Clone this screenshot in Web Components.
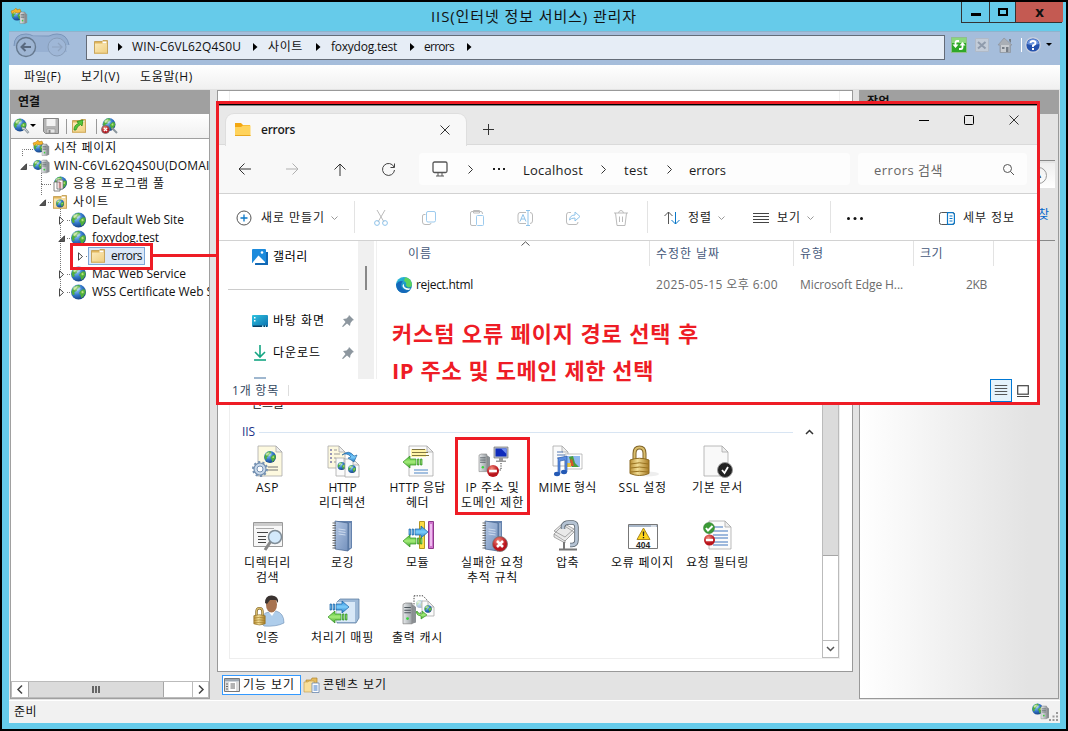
<!DOCTYPE html>
<html lang="ko">
<head>
<meta charset="utf-8">
<title>IIS(인터넷 정보 서비스) 관리자</title>
<style>
    body{
        margin: 0;
        width: 1068px;
        height: 731px;
        overflow: hidden;
        position: relative;
        font: 12px/16px "Open Sans", "Noto Sans CJK KR", sans-serif;
        color: #111;
    }
    /* annotations and the second window float over the manager */
    file-explorer{ position: absolute; left: 216px; top: 101px; }
    mark-box{ position: absolute; }
    .tree-mark{ left: 70px; top: 243px; width: 83px; height: 27px; }
    .link-mark{ left: 153px; top: 254px; width: 64px; height: 3px; border: 0; background: #ee1c25; }
    .item-mark{ left: 455px; top: 437px; width: 75px; height: 78px; }
</style>
</head>
<body>
<iis-manager></iis-manager>
<file-explorer></file-explorer>
<mark-box class="tree-mark"></mark-box>
<mark-box class="link-mark"></mark-box>
<mark-box class="item-mark"></mark-box>

<script>
const globe = (x, y, r) => `<g transform="translate(${x} ${y}) scale(${r / 8})">
    <circle r="8" fill="url(#gl)"/>
    <path fill="#4fae3c" d="M-6-4.500Q-3-8 1-7.500L2-5-1-3.500-2-1-4.500 0-4 2.500-6 3.500-7.500 0ZM2-1 4.500-3 7.300-2.500 7.500 1 5 5 3 6.500 2 3 .5 1Z"/>
    <path fill="#b8e07a" d="M-5-4.500-1-6.500-2-4-5-2ZM3-.5 5-1.500 5.500 1 3.500 1.500Z"/>
    <ellipse cx="-2" cy="-4" rx="4" ry="2.500" fill="#fff" opacity=".35"/></g>`
const page = (x, y, w, h, fill = '#fbfbfb') => `<path fill="${fill}" stroke="#aaa" stroke-width=".8" d="M${x} ${y}h${w - 6}l6 6v${h - 6}h${-w}z"/>
    <path fill="#eee" stroke="#aaa" stroke-width=".8" d="M${x + w - 6} ${y}v6h6z"/>`
const server = (x, y, s) => `<g transform="translate(${x} ${y}) scale(${s})">
    <path fill="#8b9094" d="M7 1 10 3V15L7 16Z"/><path fill="url(#steel)" stroke="#777" stroke-width=".5" d="M0 1 2 0H7V16H0Z"/>
    <path stroke="#4d565c" stroke-width=".8" d="M1 3.500H6M1 5.500H6M1 7.500H6"/><circle cx="3.500" cy="12" r="1.100" fill="#39d43c"/></g>`
const lock = (x, y, s) => `<g transform="translate(${x} ${y}) scale(${s})">
    <path fill="none" stroke="#80652a" stroke-width="4" d="M5 15V8Q5 2 10 2T15 8V15"/>
    <path fill="none" stroke="#d9bd6c" stroke-width="2" d="M5 15V8Q5 2 10 2T15 8V15"/>
    <path fill="url(#gold)" stroke="#8d6b22" d="M.5 14.500Q10 11 19.500 14.500V28Q10 32 .5 28Z"/>
    <path stroke="#9a7422" fill="none" d="M1 18.500Q10 16 19 18.500M1 22.500Q10 20.500 19 22.500M1 26.500Q10 25 19 26.500"/></g>`
const folder = `<path fill="#e0b55b" stroke="#c0994b" stroke-width=".8" d="M1.500 2.500H9L10 1.500H14.500V14.500H1.500Z"/>
    <path fill="#fff" d="M9.500 2.500H13.500V4.500H9.500Z"/><path fill="url(#fold)" d="M2 4.500H14V14H2Z"/><path fill="#e8c87f" d="M2 13H14V14.500H2Z"/>`
const arrowR = (x, y) => `<path fill="url(#blue)" stroke="#1b62a5" stroke-width=".7" d="M${x + 6} ${y + 3}h6v-3l7 6-7 6v-3h-6zM${x} ${y + 3}h1.500v6h-1.500zM${x + 3} ${y + 3}h1.500v6h-1.500z"/>`
const arrowL = (x, y) => `<path fill="url(#green)" stroke="#2f8f1f" stroke-width=".7" d="M${x + 13} ${y + 3}h-6v-3l-7 6 7 6v-3h6zM${x + 19} ${y + 3}h-1.500v6h1.500zM${x + 16} ${y + 3}h-1.500v6h1.500z"/>`
const book = `<path fill="#6583ae" d="M9 1 25 1V28L21 31 8 28Z"/><path fill="url(#bookg)" stroke="#46648f" stroke-width=".7" d="M8 1 21 3V31L8 29Z"/>
    <path fill="none" stroke="#dce6f5" stroke-width=".8" d="M11.500 9 18.500 10M11.500 11.500 18.500 12.500M11.500 14 18.500 15M23 3V28"/>
    <path stroke="#666" stroke-width="1" d="M5.500 3H9M5.500 5.500H9M5.500 8H9M5.500 10.500H9M5.500 13H9M5.500 15.500H9M5.500 18H9M5.500 20.500H9M5.500 23H9M5.500 25.500H9M5.500 28H9"/>`
const cross = (x, y, r) => `<circle cx="${x}" cy="${y}" r="${r}" fill="url(#red)" stroke="#777" stroke-width=".8"/>
    <path stroke="#fff" stroke-width="${r / 3}" d="M${x - r * .4} ${y - r * .4}l${r * .8} ${r * .8}m0 ${-r * .8}l${-r * .8} ${r * .8}"/>`
const noEntry = (x, y, r) => `<circle cx="${x}" cy="${y}" r="${r}" fill="url(#red)"/><path fill="#fff" d="M${x - r * .65} ${y - r * .22}h${r * 1.3}v${r * .44}h${-r * 1.3}z"/>`
const line = (d, c = '#333', w = 1) => `<path fill="none" stroke="${c}" stroke-width="${w}" d="${d}"/>`

const defs = `<defs>
    <radialGradient id="gl" cx=".35" cy=".3" r=".8"><stop offset="0" stop-color="#a5d8fa"/><stop offset=".5" stop-color="#3479cb"/><stop offset="1" stop-color="#0f3574"/></radialGradient>
    <linearGradient id="steel"><stop offset="0" stop-color="#e6e9eb"/><stop offset="1" stop-color="#9ba1a5"/></linearGradient>
    <linearGradient id="gold"><stop offset="0" stop-color="#b98f35"/><stop offset=".4" stop-color="#f2dd94"/><stop offset="1" stop-color="#a87b24"/></linearGradient>
    <linearGradient id="fold" x2="1" y2="1"><stop offset="0" stop-color="#fbe9b8"/><stop offset="1" stop-color="#f0cf80"/></linearGradient>
    <linearGradient id="blue" x2="0" y2="1"><stop offset="0" stop-color="#2b8edc"/><stop offset=".5" stop-color="#7ccdfb"/><stop offset="1" stop-color="#1f78c4"/></linearGradient>
    <linearGradient id="green" x2="0" y2="1"><stop offset="0" stop-color="#49b832"/><stop offset=".5" stop-color="#a5ec7a"/><stop offset="1" stop-color="#3aa327"/></linearGradient>
    <linearGradient id="bookg" x2="1" y2="1"><stop offset="0" stop-color="#b3c7e4"/><stop offset="1" stop-color="#7491bd"/></linearGradient>
    <radialGradient id="red" cx=".4" cy=".3"><stop offset="0" stop-color="#f28c7c"/><stop offset="1" stop-color="#b9141c"/></radialGradient>
    <linearGradient id="teal" x2="1" y2="1"><stop offset="0" stop-color="#2fc3e0"/><stop offset="1" stop-color="#0b6fae"/></linearGradient>
</defs>`

// [width, height, markup]
const icons = {
    server: [16, 16, globe(5, 7, 5) + server(8.500, 2, .8)],
    start: [16, 16, globe(6, 7, 5.500) + '<path fill="#f6b52a" stroke="#b57a12" stroke-width=".5" d="M0 3 3 2 5 0 6 2 9 1 10 4 7 5 3 4 1 6Z"/>' + server(9, 4, .72)],
    pool: [16, 16, globe(8.500, 7, 6.500) + '<path fill="#fff" stroke="#666" stroke-width=".8" d="M2 6H8V15H2ZM5 4H11V13H5Z"/>' + line('M6.500 7H9.500M6.500 9H9.500M6.500 11H9.500', '#c44', .8)],
    sites: [16, 16, folder + globe(8, 9.500, 4)],
    globe: [16, 16, globe(7.500, 8, 7.500)],
    folder: [16, 16, folder],
    connect: [17, 16, globe(7, 7, 6.500) + '<path fill="none" stroke="#8a959c" stroke-width="2.500" d="M9 10 12 11 15.500 15"/><path stroke="#d7dde0" d="M9 10 12 11 15 14.500" fill="none"/>'],
    disconnect: [17, 16, globe(8, 6.500, 6.500) + '<path fill="none" stroke="#8a959c" stroke-width="2" d="M11 10 16 15"/>' + cross(4.500, 11.500, 4)],
    save: [16, 16, '<path fill="#b4b4b4" stroke="#858585" d="M.5.500H15.500V15.500H2.500L.5 13.500Z"/><path fill="#f2f2f2" d="M3.500 1H12.500V8H3.500Z"/><path fill="#e5e5e5" stroke="#999" stroke-width=".7" d="M4 11H12V15H4Z"/><path fill="#888" d="M5.500 12H7.500V15H5.500Z"/>'],
    up: [16, 16, folder + '<path fill="#55c83c" stroke="#258b16" stroke-width=".8" d="M3 12Q3 7 7.500 5.500L6 3.500 12 2 11 8 9.500 6.500Q6 8 5 12Z"/>'],
    drop: [7, 4, '<path d="M0 0H6L3 3Z" fill="#000"/>'],
    crumb: [5, 8, '<path d="M0 0 4.500 4 0 8Z" fill="#000"/>'],
    refresh: [16, 16, '<path fill="#2fa828" stroke="#8fbf8c" d="M.5.500H15.500V15.500H.5Z"/><path fill="#8ad87c" d="M1 1H15V6H1Z"/><path fill="none" stroke="#fff" stroke-width="1.800" d="M8 4H6Q4.500 4 4.500 6V9M8 12H10Q11.500 12 11.500 10V7"/><path fill="#fff" d="M1.500 7.500H7.500L4.500 11ZM8.500 8.500H14.500L11.500 5Z"/>'],
    stop: [16, 16, '<path fill="#c3ccd8" stroke="#b0bac8" d="M1.500 1.500H14.500V14.500H1.500Z"/>' + line('M4 5 11.500 11.500M11.500 5 4 11.500', '#8f9bac', 2)],
    home: [17, 16, '<path fill="#a9aeb5" stroke="#8d949d" stroke-width=".7" d="M1 8 7 1 15 8H13.500V15.500H3V8Z"/><path fill="#c9cdd2" d="M4 8H12V15H4Z"/><path fill="#777e87" d="M9 10H11.500V15H9ZM5 10H7.500V12H5ZM12 2H14V6L12 4Z"/>'],
    help: [16, 16, '<circle cx="8" cy="8" r="7.300" fill="#2552ad" stroke="#c6cfdf" stroke-width="1.400"/><path fill="#6a93dd" d="M2 7Q3 2 8 2T14 7Q8 9 2 7Z"/><path fill="none" stroke="#fff" stroke-width="1.900" d="M5.500 6Q5.500 4 8 4T10.500 6Q10.500 7.500 8 8.500V10"/><path fill="#fff" d="M7 11H9V13H7Z"/>'],
    nav: [58, 28, `<path fill="#93aed0" stroke="#7a95ba" d="M1 14Q1 2 13 2Q17 2 20 4H36Q40 2 44 2Q54 2 56 13"/><path fill="#97b0d2" d="M3 14Q3 4 13 4L36 5Q44 3 50 7L54 20H6Z"/>
        <circle cx="13" cy="15" r="9.500" fill="#9eb5d3" stroke="#66798f" stroke-width="1.400"/>` + line('M18 15H9M12.500 11 8.500 15 12.500 19', '#59697f', 2) +
        '<circle cx="44" cy="15" r="9" fill="#9fb7d7" stroke="#879db9"/>' + line('M39 15H48M45 11 49 15 45 19', '#8fa4bf', 1.200)],
    treeOpen: [7, 7, '<path d="M6.500.800V6.500H.800Z" fill="#555" stroke="#222" stroke-width=".7"/>'],
    treeShut: [7, 9, '<path d="M1.500.800 5.500 4.500 1.500 8.200Z" fill="#fff" stroke="#333" stroke-width=".9"/>'],
    left: [6, 9, line('M5 .5 1 4.500 5 8.500', '#444', 1.500)],
    right: [6, 9, line('M1 .5 5 4.500 1 8.500', '#444', 1.500)],
    down: [9, 6, line('M1 1 4.500 4.500 8 1', '#555', 1.500)],
    upc: [9, 6, line('M1 5 4.500 1.500 8 5', '#333', 1.500)],
    feature: [16, 16, '<path fill="#fff" stroke="#777" d="M.5 1.500H15.500V14.500H.5Z"/><path fill="#9da7b1" d="M1 2H15V4.500H1Z"/><path fill="#ddd" d="M1 5H5V14H1ZM12 5H15V14H12Z"/>' + line('M2 7H4M2 9.500H4M2 12H4M6.500 7H11M6.500 9H11M6.500 11H11', '#666', 1)],
    content: [17, 16, '<path fill="#e6bb5c" stroke="#ad8430" stroke-width=".7" d="M3 3H8L9 1H14V12H3Z"/><path fill="#f8df9c" stroke="#bd9848" stroke-width=".6" d="M1 5H5L6 4H11V15H1Z"/><path fill="#fff" stroke="#6886af" stroke-width=".8" d="M9 6H16V15.500H9Z"/>' + line('M10.500 9H14.500M10.500 11H14.500M10.500 13H14.500', '#3976c8')],

    asp: [32, 32, page(6, 1, 24, 30, '#fdf9df') + globe(18, 12, 6) + line('M16 22H26M16 25H26', '#777', 1.200) +
        '<circle cx="8" cy="24" r="6" fill="#c9d9ea" stroke="#7591b2" stroke-width="1.200"/><circle cx="8" cy="24" r="7" fill="none" stroke="#7591b2" stroke-width="2" stroke-dasharray="2.200 2.200"/><circle cx="8" cy="24" r="3" fill="#fff" stroke="#7591b2"/>'],
    redirect: [32, 32, page(1, 1, 17, 22, '#fdf9df') + line('M7 5H10M7 9H13M7 13H9M7 17H9', '#999') + line('M3 5H5M3 9H5M3 13H5M3 17H5', '#77a', 1.500) +
        page(9, 13, 14, 18) + globe(14.500, 21, 4) + page(18, 14, 14, 18) + globe(25, 24, 4) + '<path fill="url(#blue)" stroke="#1c5d95" stroke-width=".6" d="M15 10Q22 4 27 11L30 10 27 17 21 13 24 12Q20 7 15 10Z"/>'],
    header: [32, 32, page(7, 1, 24, 30) + '<path fill="#fff4a8" d="M9 4H24V12H9Z"/>' + line('M10 4.500H23M10 7.500H26M10 10.500H27', '#807640', 1.200) + arrowL(1, 11) + line('M12 25H26M12 28H26', '#4d86c6', 1.200)],
    restrict: [32, 32, server(2, 9, 1.100) + '<path fill="#b8bfc6" stroke="#777" stroke-width=".7" d="M17 2H31V13H17Z"/><path fill="#102bbb" d="M18.500 3.500H29.500V11.500H18.500Z"/><path fill="#6e8bf0" d="M24 3.500H29.500V9Z"/><path fill="#999" d="M22 13H26V15.500H29V17H19V15.500H22Z"/><path fill="none" stroke="#333" stroke-dasharray="1.200 1.200" d="M24 18V25H20"/>' + noEntry(16, 26, 6)],
    mime: [32, 32, page(1, 1, 15, 20) + line('M5 7H11M5 10H13M5 13H13', '#557bb5') + '<path fill="#fff" stroke="#999" stroke-width=".6" d="M13 9H30V24H13Z"/><path fill="#8fb9ef" d="M15 11H28V22H15Z"/><path fill="#4a9e3c" d="M17 12 21 11 23 18 27 22H20Z"/><path fill="#d4552d" d="M18 15 20 14 22 21H19Z"/><path fill="#e8c53a" d="M15 18H19V22H15Z"/><path fill="#5a8be0" stroke="#2455a8" stroke-width=".6" d="M6 13 15 11V27H13V15L8 16V29H6Z"/><ellipse cx="5" cy="29" rx="3" ry="2.200" fill="#2459b5"/><ellipse cx="12" cy="27" rx="3" ry="2.200" fill="#2459b5"/>'],
    ssl: [32, 32, '<ellipse cx="20" cy="29" rx="12" ry="2.500" fill="#eee"/>' + lock(2.500, .5, 1)],
    doc: [32, 32, page(2, 1, 24, 30, '#f9f9f9') + '<circle cx="23" cy="25" r="7.500" fill="#222" stroke="#999"/><path fill="none" stroke="#fff" stroke-width="1.800" d="M20 25 22.500 28 26 22"/>'],
    browse: [32, 32, '<path fill="#f7f7f7" stroke="#999" d="M1.500 2.500H30.500V26.500H1.500Z"/><path fill="#ccc" d="M2 3H30V6H2Z"/>' + line('M4 8.500H22', '#aaa', 1) + line('M5 12.500H16M6 16.500H14M6 19.500H14M6 22.500H14', '#444') + line('M19 21 13 30', '#888', 3) + '<circle cx="23" cy="17" r="6.500" fill="#d3e9fb" stroke="#7f8c96" stroke-width="1.500"/>'],
    log: [32, 32, book],
    modules: [32, 32, '<path fill="#fbdc45" stroke="#b59721" d="M17.500 1.500H22.500V28.500H17.500Z"/><path fill="#fff29c" d="M19 8H21V24H19Z"/><path fill="#cf73cc" stroke="#8e3a8c" d="M26.500 1.500H31.500V28.500H26.500Z"/><path fill="#eebcf0" d="M28 4H30V26H28Z"/>' + arrowR(7, 6) + arrowL(1, 15)],
    failed: [32, 32, book + cross(23, 24, 7.500)],
    compress: [32, 32, '<path fill="#e9e9e9" stroke="#888" stroke-width=".7" d="M2 14 11 5 22 12 13 21ZM2 11 11 3 22 9 13 17ZM2 14V17L13 23V20"/>' + line('M11 9V6Q12 2.500 17 2.500H21Q24.500 3 24.500 7V20Q24.500 25 20 25H18', '#59646e', 4.500) + line('M11 9V6Q12 2.500 17 2.500H21Q24.500 3 24.500 7V20Q24.500 25 20 25H18', '#b5c3d3', 2.800) + line('M12 22V29M7 29.500H25', '#777', 2)],
    error: [32, 32, '<path fill="#fff" stroke="#777" d="M1.500 4.500H30.500V28.500H1.500Z"/><path fill="#a8b7c9" d="M2 5H30V7H2Z"/>' + line('M24 6H29', '#fff', 1) + '<path fill="#ffd51d" stroke="#a9861d" d="M16.500 8 23 19.500H10Z"/><path fill="#222" d="M15.700 11.500H17.300L17 16H16ZM15.800 17H17.200V18.200H15.800Z"/><text x="9" y="27.500" font-family="Liberation Sans" font-weight="bold" font-size="8.500" fill="#222">404</text>'],
    filter: [32, 32, page(7, 1, 22, 28) + line('M11 7H21M11 11H26M11 15H26M11 18H26M11 22H26M11 25H26', '#4176bd', 1.200) + '<circle cx="7" cy="8" r="5.500" fill="#3b9b36" stroke="#2c742a" stroke-width=".5"/>' + line('M4 8 6 10.500 10.500 6', '#fff', 2) + noEntry(7.500, 20, 5.500)],
    auth: [32, 32, '<path fill="#aecdeb" stroke="#6f8fb3" stroke-width=".6" d="M9 28Q9 18 17 17L20 19 24 16Q32 18 32 28Q24 32 12 31Z"/><path fill="#fff" d="M16 16 20 21 24 15Z"/><ellipse cx="19.500" cy="9.500" rx="5.500" ry="8" fill="#a77350"/><path fill="#3a3330" d="M13 8Q13 0 20 .5T26 8L24 5H18L15 9Z"/>' + lock(1.500, 12, .6)],
    handler: [32, 32, '<path fill="#9db9d7" stroke="#53779b" stroke-width=".7" d="M10 7 13 4H32V23L29 28H10Z"/><path fill="#d8e8f7" d="M10 7H28V27H10Z"/>' + arrowR(3, 6) + arrowL(1, 16)],
    cache: [32, 32, '<path fill="#fff" stroke="#444" stroke-dasharray="1.300 1.300" d="M12 .8H21L25 5V18H12Z"/><g opacity=".35">' + globe(18, 9, 4) + '</g>' + page(20, 6, 12, 15) + globe(26, 14, 3.700) + server(1, 8, 1.300) + '<path fill="url(#green)" stroke="#2f8f1f" stroke-width=".6" d="M15 16Q17 20 20 19V16L25 20 19 24V21Q15 21 14 17Z"/>'],
    tray: [17, 17, globe(5.500, 6, 5.500) + server(9, 3, .8)],

    tabFolder: [17, 15, '<path fill="#f3a712" d="M1 1H7L9 3H16V14H1Z"/><path fill="#ffd35c" d="M1 5H7L9 3.500H16.500V14H1Z"/><path fill="#e9a820" d="M1 13H16.500V14H1Z"/>'],
    x: [10, 10, line('M.5.500 9.500 9.500M9.500.500.5 9.500')],
    plus: [11, 11, line('M5.500 0V11M0 5.500H11')],
    min: [10, 10, line('M0 5.500H10', '#000')],
    max: [10, 10, '<rect x=".5" y=".5" width="9" height="9" rx="1" fill="none" stroke="#000"/>'],
    back: [13, 12, line('M13 6H1M6.500.500 1 6 6.500 11.500')],
    fwd: [13, 12, line('M0 6H12M6.500.500 12 6 6.500 11.500', '#b0b0b0')],
    upArrow: [12, 13, line('M6 13V1M.5 6.500 6 1 11.500 6.500')],
    reload: [13, 13, line('M12 4A6 6 0 1 0 12.500 7M12.500 .5V4.500H8.500', '#444')],
    monitor: [16, 16, '<rect x="1" y="1" width="14" height="10.500" rx="1.500" fill="none" stroke="#555" stroke-width="1.300"/>' + line('M6 12V15M10 12V15M4 15H12', '#555')],
    chev: [5, 9, line('M.5.500 4.500 4.500.5 8.500')],
    dots: [12, 3, '<path fill="#222" d="M0 0H2V2H0ZM5 0H7V2H5ZM10 0H12V2H10Z"/>'],
    bigDots: [16, 3, '<g fill="#111"><circle cx="1.500" cy="1.500" r="1.500"/><circle cx="8" cy="1.500" r="1.500"/><circle cx="14.500" cy="1.500" r="1.500"/></g>'],
    search: [11, 11, '<circle cx="4.500" cy="4.500" r="4" fill="none" stroke="#555"/>' + line('M7.500 7.500 11 11', '#555')],
    add: [16, 16, '<circle cx="8" cy="8" r="7" fill="none" stroke="#555"/>' + line('M8 4.500V11.500M4.500 8H11.500', '#0b78c8', 1.300)],
    smallDown: [7, 5, line('M.5.500 3.500 3.500 6.500.500', '#999')],
    cut: [16, 16, line('M4 0 11 12M12 0 5 12', '#bbb') + '<circle cx="4" cy="13" r="2.400" fill="none" stroke="#8fc3ea"/><circle cx="12" cy="13" r="2.400" fill="none" stroke="#8fc3ea"/>'],
    copy: [16, 16, line('M4.500 4.500H3Q1.500 4.500 1.500 6V12Q1.500 14.500 4 14.500H8Q10 14.500 10 13', '#bbb') + '<rect x="5.500" y="1.500" width="9" height="10.500" rx="1.500" fill="none" stroke="#9dcbee"/>'],
    paste: [16, 16, line('M7 15.500H3Q1.500 15.500 1.500 14V3Q1.500 1.500 3 1.500H12Q13.500 1.500 13.500 4M4.500.500H10.500V3H4.500Z', '#bbb') + '<rect x="7.500" y="5.500" width="7" height="10" rx="1" fill="#fff" stroke="#9dcbee"/>'],
    rename: [16, 16, line('M9 2.500H3Q1 2.500 1 5V11Q1 13.500 3 13.500H9M13 2.500Q15.500 2.500 15.500 5V11Q15.500 13.500 13 13.500', '#bbb') + line('M9 .5H13M11 .5V15.500M9 15.500H13M3 11.500 6 4.500 9 11.500M4 9H8', '#8fc3ea')],
    share: [16, 16, line('M6 2.500H3.500Q1.500 2.500 1.500 5V12Q1.500 14.500 4 14.500H11Q13 14.500 13 12', '#bbb') + line('M4.500 10Q5 5 10 5V2L15 6.500 10 11V8Q6 8 4.500 10Z', '#8fc3ea')],
    trash: [16, 16, line('M1 3H15M5.500 3Q6 .5 8 .5T10.500 3M2.500 3 4 15.500H12L13.500 3M6.500 6.500V12M9.500 6.500V12', '#bbb')],
    sort: [16, 14, line('M4.500 13V1M.5 5 4.500 1 8.500 5', '#555') + line('M11.500 1V13M7.500 9 11.500 13 15.500 9', '#0b78c8')],
    list: [16, 11, line('M0 .5H16M0 3.500H16M0 6.500H16M0 9.500H16', '#444')],
    details: [16, 13, '<rect x=".5" y=".5" width="15" height="12" rx="2" fill="#fff" stroke="#555"/><path fill="none" stroke="#0b78c8" stroke-width="1.200" d="M8.500.600H13.500Q15.400 1 15.400 3V10Q15.400 12.400 13 12.400H8.500ZM10.500 4H13.500M10.500 6.500H13.500M10.500 9H13.500"/>'],
    gallery: [17, 16, '<path fill="#1168b4" d="M4 3H16V16H3Z"/><rect x="0" y="0" width="14" height="14" rx="1" fill="#1c8bdc"/><path fill="#fff" d="M1 13 6.500 6.500 13 13V14H1Z"/><circle cx="10" cy="3.500" r="1.300" fill="#fff"/>'],
    desktop: [16, 12, '<rect width="16" height="12" rx="1" fill="url(#teal)"/><path fill="#fff" d="M2 2H3.500V3.500H2ZM2 5H3.500V6.500H2Z"/><path fill="#0a3d63" d="M1 10.500H15V12H1Z"/><path fill="#9be5f5" d="M10 10.500H11.500V12H10ZM13 10.500H14V12H13Z"/>'],
    download: [12, 16, line('M6 0V12M1 7 6 12 11 7', '#15a683', 1.600) + line('M0 15H12', '#15a683', 1.600)],
    pin: [12, 12, '<path fill="#8d979f" d="M7 0 12 5 10.500 5.500 8.500 8 8 11 5 8.500 1 12 0 11.500 3.500 7 1 4 4.500 3.500 6.500 1.500Z"/>'],
    edge: [16, 16, '<circle cx="8" cy="8" r="8" fill="url(#teal)"/><path fill="#5ad35f" d="M9 .2Q15 1 16 7 16 10.500 12 10.500L10 8.500Q11 5 8 4Z"/><path fill="#1568ba" d="M.1 7Q3 3 7 4.500 4 7 6 11 9 15 14 12.500 10 18 4 15 0 12 .1 7Z"/><path fill="#fff" d="M8 7Q7 11 13 11.500L14.500 11.500 13 13Q10 13 8 11.500 5 8.500 8 7Z"/>'],
    thumb: [12, 12, '<rect x=".7" y=".7" width="10.600" height="8.500" fill="none" stroke="#444" stroke-width="1.200"/>' + line('M0 11.500H12', '#444')],
    caret: [9, 5, line('M.5 4.500 4.500.800 8.500 4.500', '#555')],
    grip: [9, 9, '<path fill="#999" d="M7 0H9V2H7ZM3.500 3.500H5.500V5.500H3.500ZM7 3.500H9V5.500H7ZM0 7H2V9H0ZM3.500 7H5.500V9H3.500ZM7 7H9V9H7Z"/>'],
}

function define(name, html, setup) {
    const template = document.createElement('template')
    template.innerHTML = html
    customElements.define(name, class extends HTMLElement {
        constructor() {
            super()
            this.attachShadow({ mode: 'open' })
            this.shadowRoot.appendChild(template.content.cloneNode(true))
        }
        connectedCallback() {
            if (setup) setup(this, this.shadowRoot)
        }
    })
}

define('ui-icon', `<style>:host{ display: block; flex: none; } svg{ display: block; overflow: visible; }</style><span></span>`, (el, root) => {
    const [w, h, body] = icons[el.getAttribute('name')]
    el.style.width = w + 'px'
    el.style.height = h + 'px'
    root.querySelector('span').innerHTML = `<svg width="${w}" height="${h}" viewBox="0 0 ${w} ${h}">${defs}${body}</svg>`
})

// label with an optional target width, spread over its letters
define('ui-label', `<style>
    :host{ display: block; flex: none; white-space: nowrap; }
    span{ display: inline-block; }
</style><span><slot></slot></span>`, (el, root) => {
    if (!el.hasAttribute('w')) return
    const w = +el.getAttribute('w')
    el.style.width = w + 'px'
    queueMicrotask(() => {
        const natural = root.querySelector('span').getBoundingClientRect().width
        el.style.letterSpacing = (w - natural) / el.textContent.length + 'px'
    })
})

define('mark-box', `<style>:host{ display: block; box-sizing: border-box; border: 3px solid #ee1c25; }</style>`)

define('tree-row', `<style>
    :host{ display: flex; align-items: center; height: 18px; }
    .toggle{ width: 8px; margin-right: 5px; flex: none; }
    .item{ display: flex; align-items: center; gap: 5px; }
    :host([selected]) .item{
        margin-left: -2px; padding: 0 2px 0 1px; height: 16px;
        background: #dbe7f7; border: 1px solid #7da7d8;
    }
</style><div class="toggle"></div><div class="item"><div class="icon"></div><slot></slot></div>`, (el, root) => {
    const toggle = el.getAttribute('toggle')
    el.style.paddingLeft = 9 + 19 * el.getAttribute('level') + 'px'
    if (toggle) root.querySelector('.toggle').innerHTML = `<ui-icon name="${toggle}"></ui-icon>`
    root.querySelector('.icon').innerHTML = `<ui-icon name="${el.getAttribute('icon')}"></ui-icon>`
})

define('feature-item', `<style>
    :host{ display: flex; flex-direction: column; align-items: center; height: 74px; padding-top: 1px; line-height: 15px; }
    .text{ display: flex; flex-direction: column; align-items: center; margin-top: 3px; }
</style><div class="icon"></div><div class="text"><slot></slot></div>`, (el, root) => {
    root.querySelector('.icon').innerHTML = `<ui-icon name="${el.getAttribute('icon')}"></ui-icon>`
})

define('connections-panel', `<style>
    :host{ display: flex; flex-direction: column; width: 200px; overflow: hidden; }
    .head{ height: 24px; line-height: 24px; padding-left: 8px; background: #a0a0a0; font-weight: 600; flex: none; }
    .body{ flex: 1; display: flex; flex-direction: column; border: 1px solid #a0a0a0; border-top: 0; background: #fff; overflow: hidden; }
    .tools{ height: 24px; display: flex; align-items: center; border-bottom: 1px solid #a0a0a0; background: linear-gradient(#fff, #f0f0f0); padding-left: 2px; flex: none; }
    .tools i{ width: 1px; height: 15px; background: #999; }
    .tree{ flex: 1; position: relative; overflow: hidden; }
    .lines{ position: absolute; left: 0; top: 0; }
    tree-row{ position: relative; }
    .scroll{ height: 17px; display: flex; box-sizing: border-box; border: 1px solid #bbb; background: #fff; flex: none; }
    .scroll div{ display: flex; align-items: center; justify-content: center; box-sizing: border-box; }
    .btn{ width: 16px; }
    .thumb{ width: 136px; gap: 1px; background: #dbdbdb; border: 1px solid #a6a6a6; border-width: 0 1px; }
    .thumb b{ width: 2px; height: 7px; background: #666; }
    .end{ margin-left: auto; border-left: 1px solid #bbb; }
</style>
<div class="head"><ui-label w="22">연결</ui-label></div>
<div class="body">
    <div class="tools">
        <ui-icon name="connect"></ui-icon>
        <ui-icon name="drop"></ui-icon>
        <ui-icon name="save" style="margin-left:6px"></ui-icon>
        <i style="margin-left:7px"></i>
        <ui-icon name="up" style="margin-left:4px"></ui-icon>
        <i style="margin-left:9px"></i>
        <ui-icon name="disconnect" style="margin-left:4px"></ui-icon>
    </div>
    <div class="tree">
        <svg class="lines" width="100" height="170" fill="none" stroke="#777" stroke-dasharray="1 1">
            <path d="M22 10.500H11.500V18M18.500 26.500H22M30.500 34V45.500H41M30.500 45V56M37 63.500H41M49.500 70V155M56 81.500H60M56 99.500H60M56 135.500H60M56 153.500H60M75 117.500H79"/>
        </svg>
        <tree-row level="0" icon="start"><ui-label w="63">시작 페이지</ui-label></tree-row>
        <tree-row level="0" toggle="treeOpen" icon="server"><ui-label w="165">WIN-C6VL62Q4S0U(DOMAIN</ui-label></tree-row>
        <tree-row level="1" icon="pool"><ui-label w="92">응용 프로그램 풀</ui-label></tree-row>
        <tree-row level="1" toggle="treeOpen" icon="sites"><ui-label w="36">사이트</ui-label></tree-row>
        <tree-row level="2" toggle="treeShut" icon="globe"><ui-label w="92">Default Web Site</ui-label></tree-row>
        <tree-row level="2" toggle="treeOpen" icon="globe"><ui-label w="67">foxydog.test</ui-label></tree-row>
        <tree-row level="3" toggle="treeShut" icon="folder" selected><ui-label w="31">errors</ui-label></tree-row>
        <tree-row level="2" toggle="treeShut" icon="globe"><ui-label w="94">Mac Web Service</ui-label></tree-row>
        <tree-row level="2" toggle="treeShut" icon="globe"><ui-label w="121">WSS Certificate Web S</ui-label></tree-row>
    </div>
    <div class="scroll">
        <div class="btn"><ui-icon name="left"></ui-icon></div>
        <div class="thumb"><b></b><b></b><b></b></div>
        <div class="btn end"><ui-icon name="right"></ui-icon></div>
    </div>
</div>`)

define('features-panel', `<style>
    :host{ display: flex; flex-direction: column; width: 636px; }
    .frame{ height: 580px; box-sizing: content-box; border: 1px solid #999; background: #fff; display: flex; flex: none; }
    .list{ flex: 1; margin: 0 12px 12px 11px; display: flex; border: 1px solid #eee; border-top: 0; }
    .items{ flex: 1; padding-top: 305px; }
    .clip{ padding-left: 21px; height: 16px; }
    .group{ display: flex; align-items: center; gap: 4px; height: 16px; margin: 12px 8px 4px 12px; color: #1e3287; }
    .group hr{ flex: 1; margin: 0 8px 0 0; border: 0; height: 1px; background: #d8e5f3; }
    .grid{ display: grid; grid-template-columns: repeat(7, 75px); }
    .bar{ width: 17px; box-sizing: border-box; border: 1px solid #bbb; display: flex; flex-direction: column; margin: 20px 0 0; }
    .thumb{ height: 443px; background: #dbdbdb; border-bottom: 1px solid #a6a6a6; }
    .btn{ margin-top: auto; height: 16px; border-top: 1px solid #bbb; display: flex; align-items: center; justify-content: center; }
    .tabs{ display: flex; align-items: center; margin: 3px 0 0 5px; }
    .tab{ display: flex; align-items: center; gap: 3px; height: 18px; padding: 0 5px 0 1px; border: 1px solid transparent; }
    .on{ border-color: #3399ff; background: #fff; }
</style>
<div class="frame"><div class="list">
    <div class="items">
        <div class="clip"><ui-label w="33">컨트롤</ui-label></div>
        <div class="group"><ui-label w="13">IIS</ui-label><hr><ui-icon name="upc"></ui-icon></div>
        <div class="grid">
            <feature-item icon="asp"><ui-label w="23">ASP</ui-label></feature-item>
            <feature-item icon="redirect"><ui-label w="28">HTTP</ui-label><ui-label w="47">리디렉션</ui-label></feature-item>
            <feature-item icon="header"><ui-label w="56">HTTP 응답</ui-label><ui-label w="23">헤더</ui-label></feature-item>
            <feature-item icon="restrict"><ui-label w="54">IP 주소 및</ui-label><ui-label w="63">도메인 제한</ui-label></feature-item>
            <feature-item icon="mime"><ui-label w="58">MIME 형식</ui-label></feature-item>
            <feature-item icon="ssl"><ui-label w="48">SSL 설정</ui-label></feature-item>
            <feature-item icon="doc"><ui-label w="51">기본 문서</ui-label></feature-item>
            <feature-item icon="browse"><ui-label w="47">디렉터리</ui-label><ui-label w="23">검색</ui-label></feature-item>
            <feature-item icon="log"><ui-label w="23">로깅</ui-label></feature-item>
            <feature-item icon="modules"><ui-label w="23">모듈</ui-label></feature-item>
            <feature-item icon="failed"><ui-label w="63">실패한 요청</ui-label><ui-label w="51">추적 규칙</ui-label></feature-item>
            <feature-item icon="compress"><ui-label w="23">압축</ui-label></feature-item>
            <feature-item icon="error"><ui-label w="63">오류 페이지</ui-label></feature-item>
            <feature-item icon="filter"><ui-label w="63">요청 필터링</ui-label></feature-item>
            <feature-item icon="auth"><ui-label w="23">인증</ui-label></feature-item>
            <feature-item icon="handler"><ui-label w="63">처리기 매핑</ui-label></feature-item>
            <feature-item icon="cache"><ui-label w="51">출력 캐시</ui-label></feature-item>
        </div>
    </div>
    <div class="bar"><div class="thumb"></div><div class="btn"><ui-icon name="down"></ui-icon></div></div>
</div></div>
<div class="tabs">
    <div class="tab on"><ui-icon name="feature"></ui-icon><ui-label w="52">기능 보기</ui-label></div>
    <div class="tab"><ui-icon name="content"></ui-icon><ui-label w="64">콘텐츠 보기</ui-label></div>
</div>`)

define('actions-panel', `<style>
    :host{ display: flex; flex-direction: column; width: 200px; overflow: hidden; }
    .head{ height: 24px; line-height: 24px; padding-left: 8px; background: #a0a0a0; font-weight: 600; flex: none; }
    .body{ flex: 1; border: 1px solid #999; border-top: 0; background: linear-gradient(90deg, #fff, #e3e3e3 85%); text-align: right; padding: 46px 3px 0 4px; }
    .sec{ height: 24px; border-top: 1px solid #888; padding: 2px 0 0; }
    .box{ height: 25px; background: linear-gradient(#eee, #fff); display: flex; justify-content: flex-end; align-items: center; }
    .box i{ width: 15px; height: 15px; border: 1px solid #999; border-radius: 50%; margin-right: 8px; display: flex; justify-content: center; align-items: center; font: 7px/7px "DejaVu Sans"; }
    .link{ color: #0066cc; padding: 20px 6px 17px 0; }
    .rule{ height: 1px; background: #888; }
</style>
<div class="head"><ui-label w="23">작업</ui-label></div>
<div class="body">
    <div class="sec"><div class="box"><i>▲</i></div></div>
    <div class="link">찾</div>
    <div class="rule"></div>
</div>`)

define('iis-manager', `<style>
    :host{
        display: flex; flex-direction: column; box-sizing: border-box;
        width: 1068px; height: 731px; padding: 0 6px 6px 7px;
        border: 2px solid #000; background: #66cbea;
    }
    .title{ height: 29px; display: grid; grid-template-columns: 101px 1fr 101px; flex: none; margin-right: -2px; }
    .title > ui-icon{ margin: 6px 0 0 2px; }
    .title > ui-label{ justify-self: center; margin-right: 3px; font-size: 15px; line-height: 28px; }
    .keys{ display: grid; grid-template-columns: 28px 26px 47px; height: 21px; box-sizing: border-box; border: 1px solid #333; border-top: 0; }
    .keys div{ display: flex; align-items: center; justify-content: center; border-right: 1px solid #333; font: bold 15px/18px "Noto Sans"; }
    .keys div:last-child{ border: 0; background: #c45a52; padding-bottom: 2px; }
    .keys b{ width: 10px; height: 3px; background: #000; margin-top: 5px; }
    .keys u{ width: 6px; height: 4px; border: 2px solid #000; }
    .nav{ height: 33px; display: flex; flex: none; border-top: 1px solid #8fb3cc; background: #a5bddb; }
    .address{ width: 859px; height: 25px; margin: 3px 6px 0 15px; box-sizing: border-box; border: 1px solid #646c78; background: #e6edf6; display: flex; align-items: center; padding: 0 0 2px 6px; }
    .links{ display: flex; align-items: center; height: 26px; }
    .menu{ height: 24px; display: flex; gap: 20px; padding-left: 15px; align-items: center; flex: none; background: linear-gradient(#fff, #f0f0f0); }
    .work{ flex: 1; display: flex; background: #e3e3e3; padding: 1px 1px 1px 1px; min-height: 0; }
    .status{ height: 22px; display: flex; justify-content: space-between; align-items: center; padding: 0 2px 0 5px; border-top: 1px solid #fff; background: #f1f1f1; flex: none; }
    .status div{ display: flex; align-items: flex-end; }
</style>
<div class="title">
    <ui-icon name="start"></ui-icon>
    <ui-label w="206">IIS(인터넷 정보 서비스) 관리자</ui-label>
    <div class="keys"><div><b></b></div><div><u></u></div><div>x</div></div>
</div>
<div class="nav">
    <ui-icon name="nav" style="margin-left:4px"></ui-icon>
    <div class="address">
        <ui-icon name="folder"></ui-icon>
        <ui-icon name="crumb" style="margin:0 9px 0 9px"></ui-icon><ui-label w="109">WIN-C6VL62Q4S0U</ui-label>
        <ui-icon name="crumb" style="margin:0 10px 0 12px"></ui-icon><ui-label w="35">사이트</ui-label>
        <ui-icon name="crumb" style="margin:0 10px 0 13px"></ui-icon><ui-label w="66">foxydog.test</ui-label>
        <ui-icon name="crumb" style="margin:0 9px 0 13px"></ui-icon><ui-label w="30">errors</ui-label>
        <ui-icon name="crumb" style="margin:0 0 0 13px"></ui-icon>
    </div>
    <div class="links">
        <ui-icon name="refresh"></ui-icon>
        <ui-icon name="stop" style="margin-left:7px"></ui-icon>
        <ui-icon name="home" style="margin-left:7px"></ui-icon>
        <div style="width:1px;height:14px;background:#fff;margin:0 3px 0 7px"></div>
        <ui-icon name="help"></ui-icon>
        <ui-icon name="drop" style="margin-left:5px"></ui-icon>
    </div>
</div>
<div class="menu"><ui-label w="37">파일(F)</ui-label><ui-label w="39">보기(V)</ui-label><ui-label w="53">도움말(H)</ui-label></div>
<div class="work">
    <connections-panel></connections-panel>
    <features-panel style="margin:0 6px 0 7px"></features-panel>
    <actions-panel></actions-panel>
</div>
<div class="status"><ui-label w="23">준비</ui-label><div><ui-icon name="tray" style="margin-bottom:1px"></ui-icon><ui-icon name="grip"></ui-icon></div></div>`)

// command bar: [left edge, width, markup]
const commands = [
    [17, 16, '<ui-icon name="add"></ui-icon>'],
    [42, 64, '<ui-label w="64">새로 만들기</ui-label>'],
    [112, 7, '<ui-icon name="smallDown"></ui-icon>'],
    [135, 1, '<i></i>'],
    [154, 16, '<ui-icon name="cut"></ui-icon>'],
    [202, 16, '<ui-icon name="copy"></ui-icon>'],
    [250, 16, '<ui-icon name="paste"></ui-icon>'],
    [298, 16, '<ui-icon name="rename"></ui-icon>'],
    [346, 16, '<ui-icon name="share"></ui-icon>'],
    [394, 16, '<ui-icon name="trash"></ui-icon>'],
    [428, 1, '<i></i>'],
    [445, 16, '<ui-icon name="sort"></ui-icon>'],
    [469, 24, '<ui-label w="24">정렬</ui-label>'],
    [499, 7, '<ui-icon name="smallDown"></ui-icon>'],
    [534, 16, '<ui-icon name="list"></ui-icon>'],
    [558, 24, '<ui-label w="24">보기</ui-label>'],
    [588, 7, '<ui-icon name="smallDown"></ui-icon>'],
    [611, 1, '<i></i>'],
    [628, 16, '<ui-icon name="bigDots"></ui-icon>'],
    [720, 16, '<ui-icon name="details"></ui-icon>'],
    [744, 52, '<ui-label w="52">세부 정보</ui-label>'],
]

define('file-explorer', `<style>
    :host{ display: flex; flex-direction: column; box-sizing: border-box; width: 824px; height: 304px; border: 3px solid #ee1c25; background: #fff; color: #1b1b1b; }
    .c{ display: grid; align-items: center; justify-items: center; }
    .c > ui-label{ justify-self: start; }
    .strip{ height: 39px; flex: none; display: flex; border-top: 1px solid #000; box-shadow: inset 0 1px #888; background: #e8e8e8; border-bottom: 1px solid #dadada; }
    .tab{ width: 240px; height: 32px; box-sizing: border-box; margin: 9px 0 -1px 7px; padding: 0 0 1px 7px; border-radius: 8px 8px 0 0; background: #f8f8f8; box-shadow: 0 0 0 1px #dedede; clip-path: inset(-1px -1px 0 -1px); font-weight: 600; grid-template-columns: 19px 9px 34px 142px 15px; }
    .newtab{ width: 45px; height: 31px; margin-top: 9px; }
    .keys{ margin-left: auto; height: 30px; grid-template-columns: 46px 44px 46px; }
    .bar{ height: 48px; flex: none; background: #f8f8f8; display: flex; align-items: center; border-bottom: 1px solid #d2d2d2; font-size: 13px; }
    .bar ui-label{ padding-top: 2px; }
    .moves{ grid-template-columns: 48px 48px 48px 48px; margin-left: 1px; }
    .path{ width: 431px; height: 32px; margin-left: 7px; border-radius: 4px; background: #fdfdfd; grid-template-columns: 42px 18px 40px 4px 60px 41px 25px 40px 1fr; }
    .find{ width: 169px; height: 32px; margin-left: 8px; border-radius: 4px; background: #fdfdfd; color: #666; grid-template-columns: 16px 69px 1fr 38px; }
    .cmds{ height: 46px; flex: none; border-bottom: 1px solid #d2d2d2; }
    .cmds i{ width: 1px; height: 32px; background: #e3e3e3; }
    .cmds ui-icon, .cmds ui-label{ margin-top: 2px; }
    .main{ height: 138px; flex: none; display: flex; }
    .side{ width: 139px; overflow: hidden; color: #000; }
    .side .c{ height: 32px; padding-left: 32px; grid-template-columns: 18px 4px 65px 20px; }
    .side hr{ width: 121px; height: 1px; border: 0; background: #ccc; margin: 16px 0 15px 9px; }
    .scroll{ width: 16px; background: #f0f0f0; display: flex; justify-content: center; }
    .scroll b{ width: 2px; height: 24px; margin-top: 25px; background: #888; }
    .files{ flex: 1; margin-left: 2px; border-left: 1px solid #f0f0f0; }
    .cols{ display: grid; grid-template-columns: 273px 144px 120px 80px 1fr; height: 25px; color: #45587a; position: relative; }
    .cols div{ border-right: 1px solid #e3e3e3; padding: 5px 0 0 6px; }
    .cols div:first-child{ padding-left: 31px; }
    .cols div:last-child{ border: 0; }
    .cols ui-icon{ position: absolute; left: 144px; top: 0; }
    .row{ height: 37px; color: #6b6b6b; grid-template-columns: 19px 16px 4px 240px 144px 120px 67px; justify-content: start; }
    .row > :last-child{ justify-self: end; }
    .note{ margin: 12px 0 0 15px; color: #ee1c25; font-weight: bold; font-size: 22px; line-height: 37px; }
    .foot{ flex: 1; display: flex; align-items: center; padding-left: 13px; color: #33475f; }
    .foot i{ width: 1px; height: 11px; background: #ddd; margin-left: 9px; }
    .view{ width: 20px; height: 21px; border: 1px solid #0078d4; background: #e5f3fc; margin: 0 5px 0 auto; }
</style>
<div class="strip">
    <div class="tab c"><ui-icon name="tabFolder"></ui-icon><span></span><ui-label w="34">errors</ui-label><span></span><ui-icon name="x"></ui-icon></div>
    <div class="newtab c"><ui-icon name="plus"></ui-icon></div>
    <div class="keys c"><ui-icon name="min"></ui-icon><ui-icon name="max"></ui-icon><ui-icon name="x"></ui-icon></div>
</div>
<div class="bar">
    <div class="moves c"><ui-icon name="back"></ui-icon><ui-icon name="fwd"></ui-icon><ui-icon name="upArrow"></ui-icon><ui-icon name="reload"></ui-icon></div>
    <div class="path c">
        <ui-icon name="monitor"></ui-icon><ui-icon name="chev"></ui-icon><ui-icon name="dots"></ui-icon><span></span>
        <ui-label w="60">Localhost</ui-label><ui-icon name="chev"></ui-icon>
        <ui-label w="24">test</ui-label><ui-icon name="chev"></ui-icon><ui-label w="37">errors</ui-label>
    </div>
    <div class="find c"><span></span><ui-label w="69">errors 검색</ui-label><span></span><ui-icon name="search"></ui-icon></div>
</div>
<div class="cmds c"></div>
<div class="main">
    <div class="side">
        <div class="c"><ui-icon name="gallery"></ui-icon><span></span><ui-label w="35">갤러리</ui-label></div>
        <hr>
        <div class="c"><ui-icon name="desktop"></ui-icon><span></span><ui-label w="52">바탕 화면</ui-label><ui-icon name="pin"></ui-icon></div>
        <div class="c"><ui-icon name="download"></ui-icon><span></span><ui-label w="48">다운로드</ui-label><ui-icon name="pin"></ui-icon></div>
        <div style="width:12px;height:2px;margin:8px 0 0 35px;background:#9fb7cf"></div>
    </div>
    <div class="scroll"><b></b></div>
    <div class="files">
        <div class="cols">
            <div><ui-label w="24">이름</ui-label><ui-icon name="caret"></ui-icon></div>
            <div><ui-label w="64">수정한 날짜</ui-label></div>
            <div><ui-label w="24">유형</ui-label></div>
            <div><ui-label w="23">크기</ui-label></div>
            <div></div>
        </div>
        <div class="row c">
            <span></span><ui-icon name="edge"></ui-icon><span></span><ui-label w="57" style="color:#111">reject.html</ui-label>
            <ui-label w="122">2025-05-15 오후 6:00</ui-label><ui-label w="103">Microsoft Edge H...</ui-label><ui-label w="21">2KB</ui-label>
        </div>
        <div class="note"><ui-label w="307">커스텀 오류 페이지 경로 선택 후</ui-label><ui-label w="262">IP 주소 및 도메인 제한 선택</ui-label></div>
    </div>
</div>
<div class="foot">
    <ui-label w="47">1개 항목</ui-label><i></i>
    <div class="view c"><ui-icon name="list" style="transform:scaleX(.78)"></ui-icon></div>
    <ui-icon name="thumb" style="margin-right:8px"></ui-icon>
</div>`, (el, root) => {
    const bar = root.querySelector('.cmds')
    const cols = []
    let end = 0
    bar.innerHTML = commands.map(([x, w, html]) => {
        cols.push(x - end + 'px', w + 'px')
        end = x + w
        return '<span></span>' + html
    }).join('')
    bar.style.gridTemplateColumns = cols.join(' ')
})
</script>
</body>
</html>
